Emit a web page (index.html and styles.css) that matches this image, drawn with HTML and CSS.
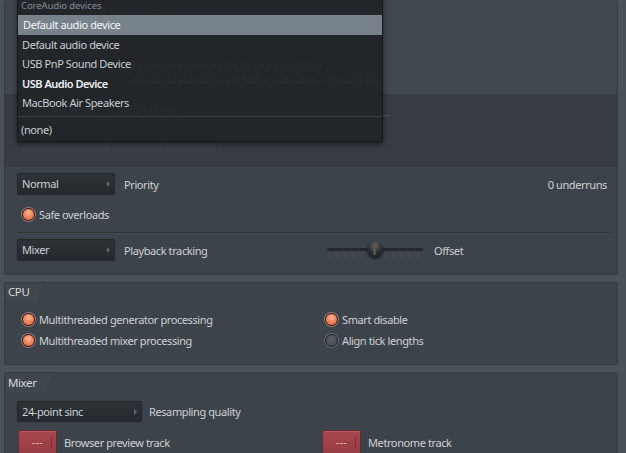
FILE: index.html
```html
<!DOCTYPE html>
<html>
<head>
<meta charset="utf-8">
<link rel="stylesheet" href="styles.css">
</head>
<body>
<div class="page">
  <section class="panel audio">
    <div class="audio-top">
      <div class="faint-line first">Sample rate (Hz)</div>
      <div class="faint-line indent">2 ports, no outputs, 0x2 inputs available</div>
      <div class="faint-line indent">Input/output latency: 450ms, output at 1 (1 sample)</div>
    </div>
    <div class="buffer">
      <div class="buf-head"><span class="buf-label">Buffer length 512smp (11ms)</span><span class="buf-rule"></span></div>
      <div class="buf-box">
        <span class="buf-knob"></span>
        <span class="buf-cell"></span>
        <span class="buf-cell small"></span>
      </div>
    </div>
    <div class="audio-main">
      <div class="row">
        <div class="dropdown w98">Normal<span class="arrow"></span></div>
        <span class="label">Priority</span>
        <span class="label right">0 underruns</span>
      </div>
      <div class="row radio-row first-radio">
        <span class="radio on"></span><span class="opt">Safe overloads</span>
      </div>
      <div class="separator"></div>
      <div class="row cols">
        <div class="cell">
          <div class="dropdown w98">Mixer<span class="arrow"></span></div>
          <span class="label">Playback tracking</span>
        </div>
        <div class="cell">
          <div class="slider">
            <div class="track"></div>
            <div class="ticks"></div>
            <div class="knob"></div>
          </div>
          <span class="label offset">Offset</span>
        </div>
      </div>
    </div>
    <div class="menu">
      <div class="menu-head">CoreAudio devices</div>
      <div class="menu-item active">Default audio device</div>
      <div class="menu-item">Default audio device</div>
      <div class="menu-item">USB PnP Sound Device</div>
      <div class="menu-item strong">USB Audio Device</div>
      <div class="menu-item">MacBook Air Speakers</div>
      <div class="menu-sep"></div>
      <div class="menu-item none">(none)</div>
    </div>
  </section>

  <section class="panel cpu">
    <div class="tab">CPU</div>
    <div class="grid">
      <div class="radio-row"><span class="radio on"></span><span class="opt">Multithreaded generator processing</span></div>
      <div class="radio-row r2"><span class="radio on"></span><span class="opt">Smart disable</span></div>
      <div class="radio-row"><span class="radio on"></span><span class="opt">Multithreaded mixer processing</span></div>
      <div class="radio-row r2"><span class="radio off"></span><span class="opt">Align tick lengths</span></div>
    </div>
  </section>

  <section class="panel mixer">
    <div class="tab wide">Mixer</div>
    <div class="row mix-row">
      <div class="dropdown w125">24-point sinc<span class="arrow"></span></div>
      <span class="label">Resampling quality</span>
    </div>
    <div class="grid btns">
      <div class="btn-row"><span class="redbtn">---</span><span class="label">Browser preview track</span></div>
      <div class="btn-row"><span class="redbtn">---</span><span class="label">Metronome track</span></div>
    </div>
  </section>
</div>
</body>
</html>
```

FILE: styles.css
```css
* { box-sizing: border-box; }
html, body { margin: 0; padding: 0; }
body {
  background: #4a5158;
  font-family: "Noto Sans", "Open Sans", sans-serif;
  font-size: 11px;
  letter-spacing: -0.4px;
  color: #cdd1d5;
  width: 626px;
  height: 453px;
  overflow: hidden;
}
.page {
  padding: 0 8px 0 4px;
  display: flex;
  flex-direction: column;
  gap: 7px;
}
.panel {
  background: #3d434a;
  border: 1px solid #353b41;
  border-radius: 2px;
  position: relative;
}
.audio { border-top: none; }

/* ---- audio top (mostly hidden by menu) ---- */
.audio-top {
  height: 94px;
  background: #40474e;
  padding-top: 8px;
}
.faint-line { line-height: 14px; color: #959ba1; white-space: nowrap; }
.faint-line.first { padding-left: 96px; margin-bottom: 37px; }
.faint-line.indent { padding-left: 126px; }
.buffer {
  height: 73px;
  background: #363c42;
  padding: 9px 0 0 16px;
}
.buf-head { display: flex; align-items: center; line-height: 14px; height: 14px; }
.buf-label { color: #959ba1; white-space: nowrap; margin-left: 16px; }
.buf-rule { width: 210px; height: 1px; background: #4e555c; margin-left: 4px; margin-top: 10px; }
.buf-box {
  margin-top: 7px;
  width: 196px;
  height: 30px;
  background: #393f45;
  border: 1px solid #33393e;
  display: flex;
  align-items: center;
  padding-left: 16px;
}
.buf-knob { width: 16px; height: 16px; border-radius: 50%; background: #262a2e; margin-top: -12px; }
.buf-cell { width: 54px; height: 28px; border-left: 1px solid #33393e; margin-left: 56px; }
.buf-cell.small { margin-left: 0; width: 50px; }

/* ---- audio main ---- */
.audio-main {
  padding: 6px 10px 13px 12px;
}
.row {
  display: flex;
  align-items: center;
  height: 22px;
}
.label { color: #cdd1d5; white-space: nowrap; margin-left: 9px; }
.label.right { margin-left: auto; }
.dropdown {
  height: 22px;
  background: linear-gradient(#2d3237, #262a2f);
  border: 1px solid #24282c;
  box-shadow: 0 0 1px rgba(0,0,0,0.5);
  border-radius: 2px;
  color: #cdd1d5;
  padding-left: 4px;
  line-height: 20px;
  position: relative;
}
.w98 { width: 98px; }
.w125 { width: 125px; height: 21px; line-height: 19px; }
.arrow {
  position: absolute;
  right: 4px;
  top: 7px;
  width: 0; height: 0;
  border-left: 3px solid #656b72;
  border-top: 3px solid transparent;
  border-bottom: 3px solid transparent;
}
.radio-row {
  display: flex;
  align-items: center;
  height: 18px;
  padding-left: 5px;
}
.first-radio { margin-top: 10px; height: 18px; }
.radio {
  width: 13px; height: 13px;
  border-radius: 50%;
  flex: none;
}
.radio.on {
  background: radial-gradient(circle at 50% 35%, #ffc0a0 0%, #f28a62 40%, #d8603c 100%);
  border: 1.5px solid #2c2220;
  box-shadow: 0 0 0 1px #a47a6c;
}
.radio.off {
  background: radial-gradient(circle at 50% 40%, #5a5f65 0%, #43484d 100%);
  border: 1.5px solid #222629;
  box-shadow: 0 0 0 1px #666c72;
}
.opt { margin-left: 4px; color: #cdd1d5; white-space: nowrap; }
.separator {
  height: 1px;
  background: #2d3237;
  margin: 9px -4px 6px 0;
  box-shadow: 0 1px 0 #454c53;
}
.cols {
  display: grid;
  grid-template-columns: 306px 1fr;
}
.cell { display: flex; align-items: center; }
.slider {
  width: 96px;
  height: 22px;
  margin-left: 4px;
  position: relative;
}
.track {
  position: absolute;
  left: 0; right: 0; top: 9px;
  height: 3px;
  background: #24282c;
  border-radius: 2px;
}
.ticks {
  position: absolute;
  left: 2px; right: 2px; top: 14px;
  height: 4px;
  background: repeating-linear-gradient(to right, #4b5259 0 1px, transparent 1px 8px);
  opacity: 0.8;
}
.knob {
  position: absolute;
  left: 40px; top: 2px;
  width: 16px; height: 17px;
  border-radius: 50%;
  background: radial-gradient(circle at 50% 25%, #5a6066 0%, #2a2e33 50%, #16191c 100%);
  box-shadow: 0 1px 2px rgba(0,0,0,0.6);
}
.knob::after {
  content: "";
  position: absolute;
  left: 6px; top: 2px;
  width: 3px; height: 12px;
  background: linear-gradient(to right, #2f5e44 0 1px, #c43a3c 1px 2px, #2f5e44 2px 3px);
  opacity: 0.9;
}
.offset { margin-left: 11px; }

/* ---- menu ---- */
.menu {
  position: absolute;
  left: 12px;
  top: -4px;
  width: 366px;
  background: rgba(33,37,41,0.95);
  border: 1px solid #17191c;
  box-shadow: 0 2px 5px rgba(0,0,0,0.55);
  padding-bottom: 1px;
  z-index: 5;
}
.menu-head {
  height: 18px;
  line-height: 18px;
  font-size: 9.5px;
  color: #858b91;
  padding-left: 3px;
  letter-spacing: -0.1px;
}
.menu-item {
  height: 19.5px;
  line-height: 19.5px;
  padding-left: 4px;
  color: #c9cdd1;
  white-space: nowrap;
}
.menu-item.active {
  background: #78828a;
  color: #f2f4f6;
  padding-left: 5px;
}
.menu-item.strong { color: #eef0f2; font-weight: 600; letter-spacing: -0.5px; }
.menu-sep {
  height: 1px;
  background: #3a4046;
  margin: 3px 0 3px;
}
.menu-item.none { height: 20px; line-height: 20px; padding-left: 3px; }

/* ---- cpu / mixer panels ---- */
.tab {
  height: 18px;
  line-height: 18px;
  width: 38px;
  padding-left: 3px;
  font-size: 11.5px;
  color: #d4d8dc;
  background: #40464d;
  clip-path: polygon(0 0, 100% 0, 84% 100%, 0 100%);
}
.tab.wide { width: 48px; height: 19px; line-height: 19px; }
.cpu { height: 83px; }
.cpu .grid { margin-top: 8px; }
.grid {
  display: grid;
  grid-template-columns: 305px 1fr;
  padding-left: 12px;
}
.cpu .radio-row { height: 21px; }
.cpu .radio-row.r2 { padding-left: 3px; }
.mixer { height: 90px; }
.mix-row { margin-top: 9px; padding-left: 12px; height: 21px; }
.mix-row .label { margin-left: 7px; }
.btns { margin-top: 8px; }
.btn-row { display: flex; align-items: center; }
.btn-row .label { margin-left: 7px; }
.btn-row:first-child { padding-left: 1px; }
.redbtn {
  width: 39px;
  height: 24px;
  border-radius: 2px;
  background: linear-gradient(#a8474d, #963c42);
  border: 1px solid #65282c;
  box-shadow: inset 0 1px 0 rgba(255,180,180,0.2);
  color: #f3c9c9;
  text-align: center;
  line-height: 22px;
  font-size: 10px;
  letter-spacing: 0.5px;
  position: relative;
}
.redbtn::after {
  content: "";
  position: absolute;
  right: 4px; top: 6px;
  width: 1px; height: 10px;
  background: rgba(90,30,34,0.6);
}
```
